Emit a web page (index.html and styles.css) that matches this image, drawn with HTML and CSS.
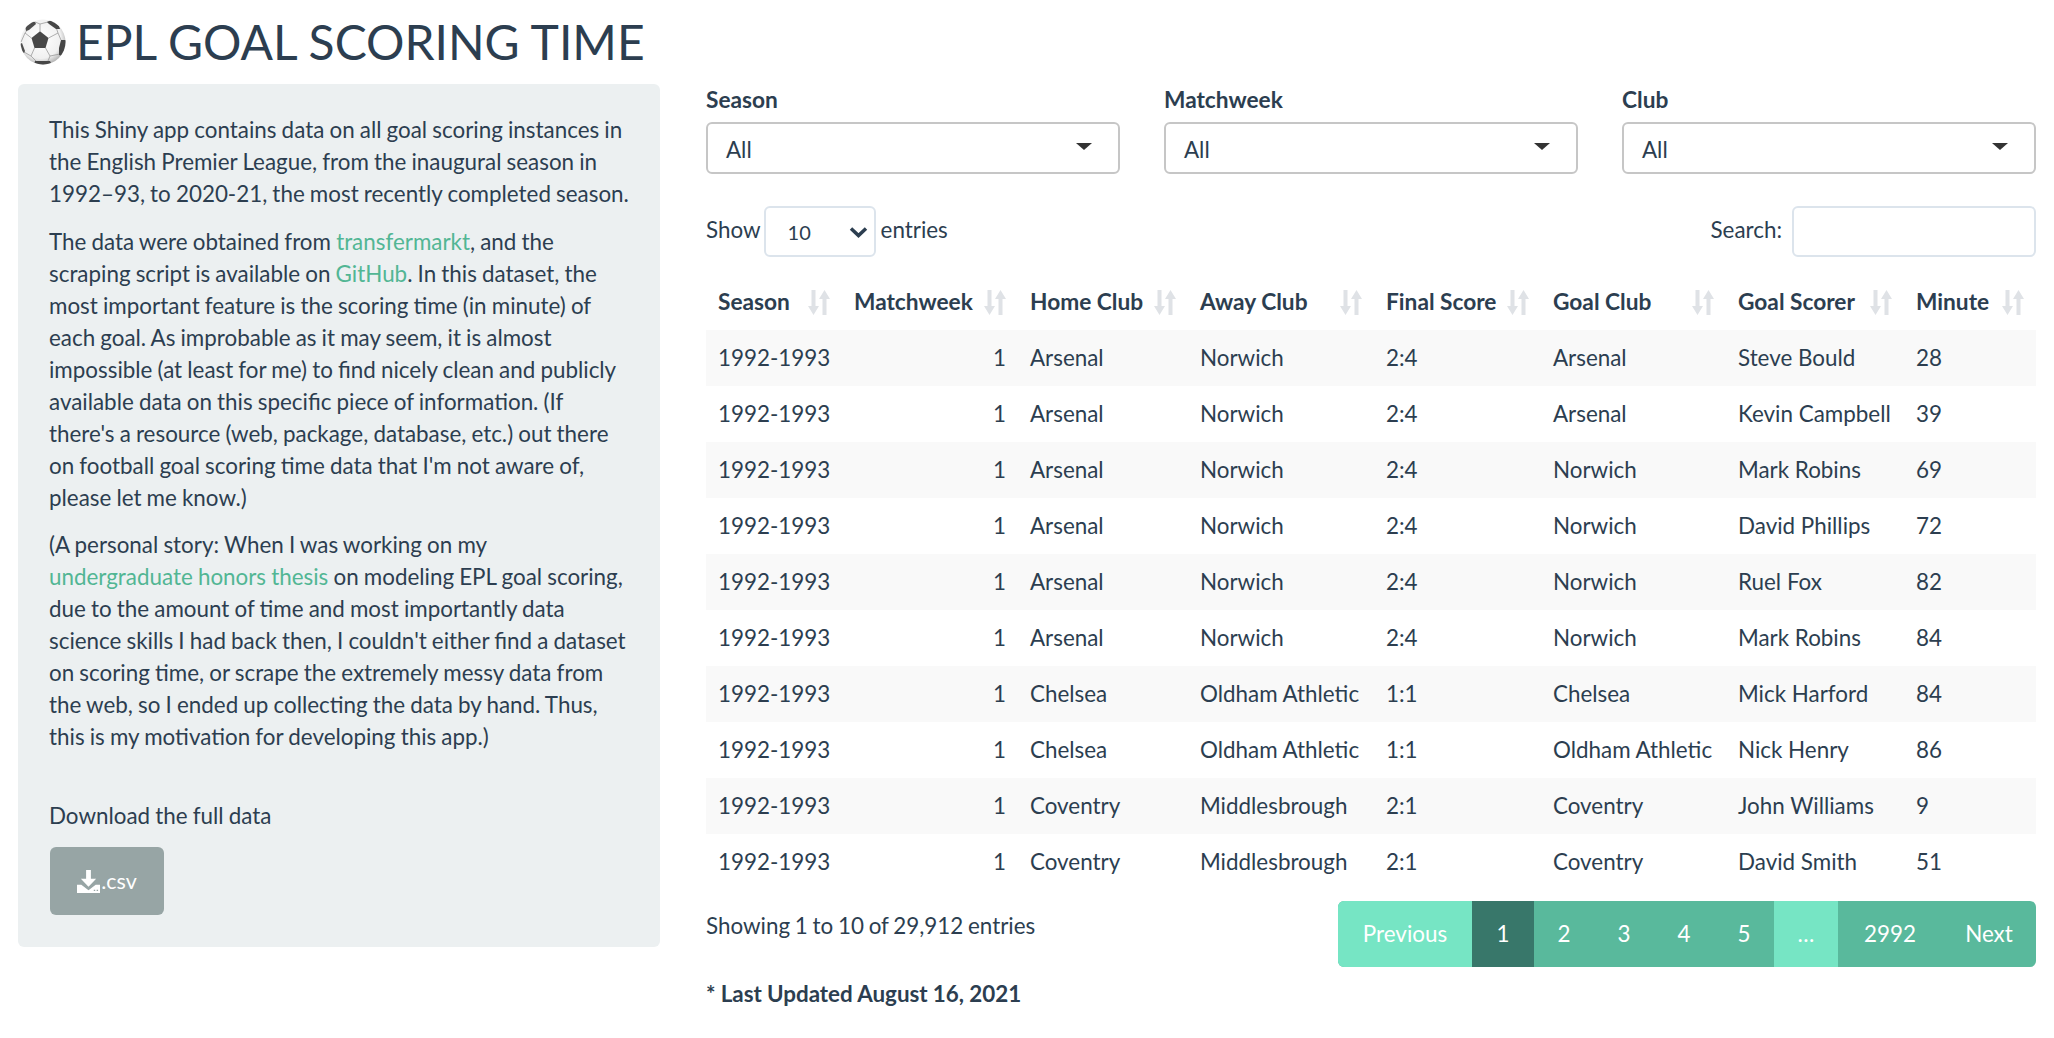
FILE: index.html
```html
<!DOCTYPE html>
<html lang="en">

<head>
    <meta charset="UTF-8">
    <meta name="viewport" content="width=device-width, initial-scale=1.0">
    <title>EPL Goal Scoring Time</title>
    <link rel="stylesheet" href="styles.css">
</head>

<body>
    <!-- Main title -->
    <header class="page-title">
        <svg class="ball" viewBox="0 0 46 46" aria-hidden="true">
            <defs>
                <radialGradient id="ball-shade" cx="45%" cy="42%" r="62%">
                    <stop offset="0%" stop-color="#ffffff"/>
                    <stop offset="72%" stop-color="#f0f0f0"/>
                    <stop offset="100%" stop-color="#a8a8a8"/>
                </radialGradient>
                <clipPath id="ball-clip"><circle cx="23" cy="23" r="22.500"/></clipPath>
            </defs>
            <circle cx="23" cy="23" r="22.500" fill="url(#ball-shade)"/>
            <g clip-path="url(#ball-clip)">
                <g fill="none" stroke="#9a9a9a" stroke-width="0.800">
                    <path d="M20 12.300V5l-5-2M20 5l8-2"/>
                    <path d="M28.500 19l9.500-5-2-6M38 14l3 7"/>
                    <path d="M25.500 29l4.500 8 10-2M30 37l-2 5"/>
                    <path d="M14.500 29L11 37l-7-4M11 37l5 5"/>
                    <path d="M11.500 19L5 14l3-4M5 14l-4 9"/>
                </g>
                <path d="M20 12.300l8.500 6.700-3 10h-11l-3-10z" fill="#474747"/>
                <path d="M5 6l6-4 4 1 1 2-7 6-3 1z" fill="#4d4d4d"/>
                <path d="M27 3l6-3 6 7 1 3-4 0-7-5z" fill="#474747"/>
                <path d="M46 21l-5 0-2 8 0 7 3 1 4-6z" fill="#474747"/>
                <path d="M15 42l8 0 7 0 2 4-18 0z" fill="#474747"/>
                <path d="M0 25l2-1 3 8-1 2-4-2z" fill="#4d4d4d"/>
            </g>
        </svg>
        <h1>EPL GOAL SCORING TIME</h1>
    </header>

    <div class="layout">
        <!-- About the app -->
        <aside class="sidebar">
            <p>This Shiny app contains data on all goal scoring instances in<br>
                the English Premier League, from the inaugural season in<br>
                1992–93, to 2020-21, the most recently completed season.</p>
            <p>The data were obtained from <a href="#">transfermarkt</a>, and the<br>
                scraping script is available on <a href="#">GitHub</a>. In this dataset, the<br>
                most important feature is the scoring time (in minute) of<br>
                each goal. As improbable as it may seem, it is almost<br>
                impossible (at least for me) to find nicely clean and publicly<br>
                available data on this specific piece of information. (If<br>
                there's a resource (web, package, database, etc.) out there<br>
                on football goal scoring time data that I'm not aware of,<br>
                please let me know.)</p>
            <p>(A personal story: When I was working on my<br>
                <a href="#">undergraduate honors thesis</a> on modeling EPL goal scoring,<br>
                due to the amount of time and most importantly data<br>
                science skills I had back then, I couldn't either find a dataset<br>
                on scoring time, or scrape the extremely messy data from<br>
                the web, so I ended up collecting the data by hand. Thus,<br>
                this is my motivation for developing this app.)</p>
            <div class="download-label">Download the full data</div>
            <a class="download-btn" href="#">
                <svg class="download-icon" viewBox="0 0 24 24" aria-hidden="true">
                    <path d="M9.500 0h5v9h5.500L12 17.500 4 9h5.500z"/>
                    <path d="M0 15.500h4.500L12 21l7.500-5.500H24V24H0z"/>
                    <path d="M17.500 20.500h1.500v1.500h-1.500zM20.500 20.500h1.500v1.500h-1.500z" fill="#97a5a5"/>
                </svg>.csv
            </a>
        </aside>

        <main class="content">
            <!-- Filters -->
            <div class="filters">
                <div class="filter">
                    <label class="filter-label">Season</label>
                    <div class="filter-box">All<span class="caret"></span></div>
                </div>
                <div class="filter">
                    <label class="filter-label">Matchweek</label>
                    <div class="filter-box">All<span class="caret"></span></div>
                </div>
                <div class="filter">
                    <label class="filter-label">Club</label>
                    <div class="filter-box">All<span class="caret"></span></div>
                </div>
            </div>

            <!-- Table controls -->
            <div class="table-controls">
                <div class="length">
                    <span class="control-text">Show</span>
                    <div class="length-box">10
                        <svg class="chevron" viewBox="0 0 19 12" aria-hidden="true">
                            <path d="M2 2.500l7.500 7 7.500-7" fill="none" stroke="#2c3e50" stroke-width="3.500"/>
                        </svg>
                    </div>
                    <span class="control-text">entries</span>
                </div>
                <div class="search">
                    <span class="control-text">Search:</span>
                    <input class="search-input" type="text">
                </div>
            </div>

            <table class="goals">
                <thead>
                    <tr id="head-row"></tr>
                </thead>
                <tbody id="goal-rows"></tbody>
            </table>

            <!-- Table footer -->
            <div class="table-footer">
                <div class="info">Showing 1 to 10 of 29,912 entries</div>
                <ul class="pagination">
                    <li class="page off prev">Previous</li>
                    <li class="page current">1</li>
                    <li class="page">2</li>
                    <li class="page">3</li>
                    <li class="page">4</li>
                    <li class="page">5</li>
                    <li class="page off dots">…</li>
                    <li class="page last">2992</li>
                    <li class="page next">Next</li>
                </ul>
            </div>

            <p class="updated">* Last Updated August 16, 2021</p>
        </main>
    </div>

    <script>
        // Column headers
        var heads = ["Season", "Matchweek", "Home Club", "Away Club", "Final Score", "Goal Club", "Goal Scorer", "Minute"];

        var sortIcon = '<svg class="sort" viewBox="0 0 22 25" aria-hidden="true">' +
            '<path d="M3.500 0h4v16H11l-5.500 9L0 16h3.500z"/>' +
            '<path d="M14.500 25h4V9H22L16.500 0 11 9h3.500z"/></svg>';

        var headRow = document.getElementById('head-row');
        heads.forEach(function (name) {
            var th = document.createElement('th');
            th.innerHTML = '<div class="th-inner"><span>' + name + '</span>' + sortIcon + '</div>';
            headRow.appendChild(th);
        });

        // First page of the data
        var rows = [
            ["Arsenal", "Norwich", "2:4", "Arsenal", "Steve Bould", 28],
            ["Arsenal", "Norwich", "2:4", "Arsenal", "Kevin Campbell", 39],
            ["Arsenal", "Norwich", "2:4", "Norwich", "Mark Robins", 69],
            ["Arsenal", "Norwich", "2:4", "Norwich", "David Phillips", 72],
            ["Arsenal", "Norwich", "2:4", "Norwich", "Ruel Fox", 82],
            ["Arsenal", "Norwich", "2:4", "Norwich", "Mark Robins", 84],
            ["Chelsea", "Oldham Athletic", "1:1", "Chelsea", "Mick Harford", 84],
            ["Chelsea", "Oldham Athletic", "1:1", "Oldham Athletic", "Nick Henry", 86],
            ["Coventry", "Middlesbrough", "2:1", "Coventry", "John Williams", 9],
            ["Coventry", "Middlesbrough", "2:1", "Coventry", "David Smith", 51]
        ];

        var body = document.getElementById('goal-rows');
        rows.forEach(function (r) {
            var tr = document.createElement('tr');
            tr.innerHTML = '<td>1992-1993</td><td class="num">1</td>' +
                r.map(function (v) { return '<td>' + v + '</td>'; }).join('');
            body.appendChild(tr);
        });
    </script>
</body>

</html>
```

FILE: styles.css
```css
/* Set the style of the entire page */
body {
    margin: 0;
    padding: 0 18px;
    background-color: #ffffff;
    color: #2c3e50;
    font-family: Lato, 'Liberation Sans', sans-serif;
    font-size: 22.4px;
    line-height: 32px;
}

a {
    color: #52b694;
    text-decoration: none;
}

/* Title */
.page-title {
    display: flex;
    align-items: center;
    gap: 10px;
    height: 84px;
    padding-left: 2px;
    box-sizing: border-box;
}

.page-title h1 {
    margin: 0;
    font-size: 48px;
    font-weight: 400;
    line-height: 1;
}

.ball {
    width: 46px;
    height: 46px;
    flex: none;
}

/* Two columns */
.layout {
    display: grid;
    grid-template-columns: 642px 1330px;
    column-gap: 46px;
    align-items: start;
}

/* Sidebar */
.sidebar {
    background-color: #ecf0f1;
    border-radius: 6px;
    padding: 30px 12px 31px 31px;
    height: 863px;
    box-sizing: border-box;
    word-spacing: -0.6px;
}

.sidebar p {
    margin: 0 0 15.500px 0;
    white-space: nowrap;
}

.download-label {
    margin-top: 47px;
}

.download-btn {
    display: flex;
    align-items: center;
    justify-content: center;
    gap: 1px;
    width: 114px;
    height: 68px;
    margin: 15px 0 0 1px;
    border-radius: 6px;
    background-color: #97a5a5;
    color: #ffffff;
    font-size: 21.500px;
}

.download-icon {
    width: 23px;
    height: 23px;
    fill: #ffffff;
}

/* Filters */
.content {
    padding-top: 1px;
}

.filters {
    display: grid;
    grid-template-columns: repeat(3, 414px);
    column-gap: 44px;
}

.filter-label {
    display: block;
    font-size: 22.700px;
    font-weight: 700;
    line-height: 30px;
    margin-bottom: 7px;
}

.filter-box {
    position: relative;
    height: 52px;
    box-sizing: border-box;
    padding: 10px 18px;
    border: 2px solid #c6c6c6;
    border-radius: 6px;
}

.caret {
    position: absolute;
    right: 26px;
    top: 19px;
    border-top: 7px solid #333333;
    border-left: 8px solid transparent;
    border-right: 8px solid transparent;
}

/* Table controls */
.table-controls {
    display: flex;
    justify-content: space-between;
    align-items: center;
    margin-top: 32px;
}

.length,
.search {
    display: flex;
    align-items: center;
    gap: 3px;
    height: 51px;
}

.search {
    gap: 10px;
}

.control-text {
    margin-bottom: 3px;
}

.length-box {
    display: flex;
    align-items: center;
    justify-content: space-between;
    width: 112px;
    height: 51px;
    box-sizing: border-box;
    margin-right: 2px;
    padding: 0 6px 0 22px;
    border: 2px solid #dce4ec;
    border-radius: 6px;
    font-size: 20px;
}

.chevron {
    width: 19px;
    height: 12px;
}

.search-input {
    width: 244px;
    height: 51px;
    box-sizing: border-box;
    border: 2px solid #dce4ec;
    border-radius: 6px;
    outline: none;
}

/* Table */
.goals {
    width: 100%;
    margin-top: 17px;
    border-collapse: collapse;
    table-layout: fixed;
}

.goals th {
    height: 56px;
    padding: 0 12px;
    text-align: left;
    font-size: 22.700px;
    font-weight: 700;
}

.th-inner {
    display: flex;
    justify-content: space-between;
    align-items: center;
}

.sort {
    width: 22px;
    height: 25px;
    flex: none;
    fill: #dfe2e6;
}

.goals th:nth-child(1) { width: 112px; }
.goals th:nth-child(2) { width: 152px; }
.goals th:nth-child(3) { width: 146px; }
.goals th:nth-child(4) { width: 162px; }
.goals th:nth-child(5) { width: 143px; }
.goals th:nth-child(6) { width: 161px; }
.goals th:nth-child(7) { width: 154px; }
.goals th:nth-child(8) { width: 108px; }

.goals td {
    height: 56px;
    padding: 0 12px;
    white-space: nowrap;
}

.goals .num {
    text-align: right;
}

.goals tbody tr:nth-child(odd) {
    background-color: #f9f9f9;
}

/* Footer of the table */
.table-footer {
    display: flex;
    justify-content: space-between;
    margin-top: 11px;
}

.info {
    padding-top: 9px;
    word-spacing: -1px;
}

.pagination {
    display: flex;
    margin: 0;
    padding: 0;
    list-style: none;
    border-radius: 6px;
    overflow: hidden;
    background-color: #59b99c;
    color: #ffffff;
}

.page {
    width: 60px;
    height: 66px;
    line-height: 66px;
    text-align: center;
}

.page.off {
    background-color: #76e5c4;
}

.page.current {
    background-color: #38776a;
    width: 62px;
}

.page.prev {
    width: 134px;
}

.page.dots {
    width: 64px;
}

.page.last {
    width: 104px;
}

.page.next {
    width: 94px;
}

.updated {
    margin: 11px 0 0 0;
    font-weight: 700;
    line-height: 32px;
    word-spacing: -0.3px;
}
```
